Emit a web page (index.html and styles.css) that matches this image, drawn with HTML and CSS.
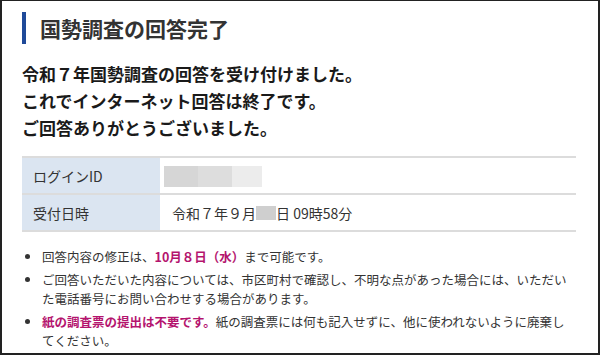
FILE: index.html
```html
<!DOCTYPE html>
<html lang="ja">
<head>
    <meta charset="UTF-8" />
    <title>国勢調査の回答完了</title>
    <link rel="stylesheet" href="styles.css">
</head>
<body>

<div class="frame">
    <h1 class="page-title">国勢調査の回答完了</h1>

    <p class="lead">
        令和７年国勢調査の回答を受け付けました。<br>
        これでインターネット回答は終了です。<br>
        ご回答ありがとうございました。
    </p>

    <table class="info">
        <tr>
            <th>ログインID</th>
            <td class="id-cell">
                <span class="mask mask-a"></span><span class="mask mask-b"></span><span class="mask mask-c"></span>
            </td>
        </tr>
        <tr>
            <th>受付日時</th>
            <td>令和７年９月<span class="mask mask-day"></span>日 09時58分</td>
        </tr>
    </table>

    <ul class="notes">
        <li>回答内容の修正は、<strong>10月８日（水）</strong>まで可能です。</li>
        <li>ご回答いただいた内容については、市区町村で確認し、不明な点があった場合には、いただいた電話番号にお問い合わせする場合があります。</li>
        <li><strong>紙の調査票の提出は不要です。</strong>紙の調査票には何も記入せずに、他に使われないように廃棄してください。</li>
    </ul>
</div>

</body>
</html>
```

FILE: styles.css
```css
html, body {
    margin: 0;
    padding: 0;
    background: #fff;
}

body {
    font-family: "Noto Sans CJK JP", "Noto Sans", sans-serif;
    color: #333;
}

.frame {
    box-sizing: border-box;
    height: 355px;
    border: 2px solid #222;
    border-top-width: 1px;
    padding: 11px 22px 0 20px;
    overflow: hidden;
}

.page-title {
    margin: 0;
    border-left: 4px solid #1f4a99;
    padding-left: 14px;
    font-size: 21px;
    line-height: 32px;
    font-weight: bold;
    color: #333;
}

.lead {
    margin: 16px 0 0;
    font-size: 17px;
    line-height: 27px;
    font-weight: bold;
    color: #1a1a1a;
}

.info {
    width: 100%;
    margin-top: 15px;
    border-collapse: collapse;
    font-size: 14px;
}

.info th,
.info td {
    height: 35px;
    padding: 0;
    border-top: 2px solid #dcdcdc;
    border-bottom: 2px solid #dcdcdc;
    text-align: left;
    font-weight: normal;
    color: #333;
}

.info th {
    width: 127px;
    padding-left: 11px;
    background: #dbe5f1;
}

.info td {
    padding-left: 12px;
}

.info td.id-cell {
    padding-left: 4px;
}

.mask {
    display: inline-block;
    vertical-align: middle;
}

.mask-a,
.mask-b,
.mask-c {
    width: 34px;
    height: 21px;
}

.mask-a { background: #d6d6d6; }
.mask-b { background: #dddddd; }
.mask-c { background: #ececec; width: 30px; }

.mask-day {
    width: 20px;
    height: 14px;
    background: #cfcfcf;
    vertical-align: -1px;
}

.notes {
    margin: 15px 0 0;
    padding-left: 20px;
    font-size: 12.5px;
    line-height: 19px;
    color: #333;
}

.notes li {
    margin-bottom: 4px;
}

.notes strong {
    color: #b4146e;
    font-weight: bold;
}
```
